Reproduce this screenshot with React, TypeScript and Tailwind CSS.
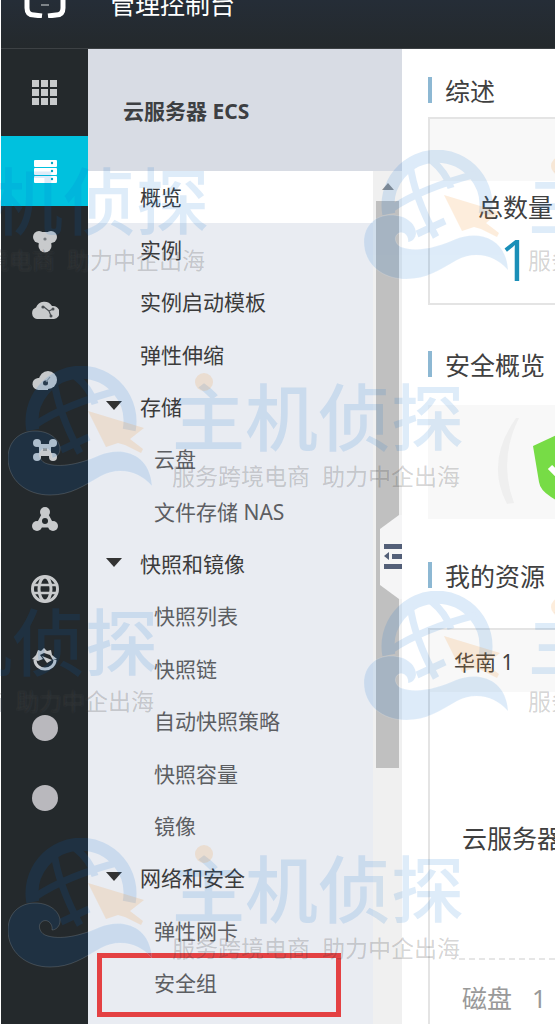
import React from 'react';
import clsx from 'clsx';

interface MenuItem {
  label: string;
  level: 'group' | 'item' | 'child';
  active?: boolean;
  highlighted?: boolean;
}

const menuItems: MenuItem[] = [
  { label: '概览', level: 'item', active: true },
  { label: '实例', level: 'item' },
  { label: '实例启动模板', level: 'item' },
  { label: '弹性伸缩', level: 'item' },
  { label: '存储', level: 'group' },
  { label: '云盘', level: 'child' },
  { label: '文件存储 NAS', level: 'child' },
  { label: '快照和镜像', level: 'group' },
  { label: '快照列表', level: 'child' },
  { label: '快照链', level: 'child' },
  { label: '自动快照策略', level: 'child' },
  { label: '快照容量', level: 'child' },
  { label: '镜像', level: 'child' },
  { label: '网络和安全', level: 'group' },
  { label: '弹性网卡', level: 'child' },
  { label: '安全组', level: 'child', highlighted: true },
];

const Icon: React.FC<{ children: React.ReactNode }> = ({ children }) => (
  <svg viewBox="0 0 28 28" className="size-7" fill="currentColor" aria-hidden="true">
    {children}
  </svg>
);

const GridIcon = () => (
  <Icon>
    {[1, 10, 19].map(y => [1, 10, 19].map(x => <rect key={`${x}-${y}`} x={x} y={y} width="7" height="7" />))}
  </Icon>
);

// Icons of the product rail, top to bottom
const products: { name: string; icon: React.ReactNode }[] = [
  {
    name: '云服务器 ECS',
    icon: (
      <>
        {[3, 11, 19].map(y => (
          <g key={y}>
            <rect x="3" y={y} width="23" height="7" rx="1" />
            <circle cx="21" cy={y + 3} r="1.2" fill="#00a5c4" />
          </g>
        ))}
      </>
    ),
  },
  {
    name: '云数据库 RDS',
    icon: (
      <>
        <circle cx="8" cy="10" r="6" />
        <circle cx="20" cy="10" r="6" />
        <circle cx="14" cy="19" r="6.5" />
        <path d="M6 5h16l-1 10-4 8h-6l-4-8z" />
        <circle cx="14" cy="12" r="1.6" fill="#777c80" />
      </>
    ),
  },
  {
    name: '负载均衡',
    icon: (
      <>
        <path d="M6 23a6 6 0 0 1-1-11.500A9 9 0 0 1 21 10a6.500 6.500 0 0 1 2 13z" />
        <path d="M13 11l5 4 4-2M18 15l2 5" stroke="#4b5054" strokeWidth="1.200" fill="none" />
        <circle cx="12" cy="11" r="1.600" fill="#4b5054" />
        <circle cx="22" cy="13" r="1.500" fill="#4b5054" />
        <circle cx="20" cy="20" r="1.500" fill="#4b5054" />
      </>
    ),
  },
  {
    name: '对象存储 OSS',
    icon: (
      <>
        <circle cx="17" cy="14" r="9" />
        <path d="M8 24a6 6 0 0 1-1-12h10v12z" />
        <circle cx="14.500" cy="17" r="2.500" fill="#30363a" />
        <path d="M15 16l4-5" stroke="#8c9296" strokeWidth="1.200" />
      </>
    ),
  },
  {
    name: '专有网络 VPC',
    icon: (
      <>
        <path d="M6 7l16 14M22 7L6 21" stroke="currentColor" strokeWidth="4" />
        <circle cx="6" cy="7" r="4" />
        <circle cx="22" cy="7" r="4" />
        <circle cx="6" cy="21" r="4" />
        <circle cx="22" cy="21" r="4" />
        <rect x="8" y="8" width="12" height="12" rx="2" />
        <rect x="12" y="12" width="4" height="3" fill="#8c9296" />
      </>
    ),
  },
  {
    name: '内容分发 CDN',
    icon: (
      <>
        <path d="M14 6L6 21h16z" stroke="currentColor" strokeWidth="3" />
        <circle cx="14" cy="7" r="5" />
        <circle cx="6" cy="21" r="5" />
        <circle cx="22" cy="21" r="5" />
        <circle cx="14" cy="16" r="3" fill="#24292c" />
      </>
    ),
  },
  {
    name: '域名',
    icon: (
      <g fill="none" stroke="currentColor" strokeWidth="3">
        <circle cx="14" cy="14" r="12.500" />
        <ellipse cx="14" cy="14" rx="6" ry="12" />
        <path d="M2 10h24M2 18h24" strokeWidth="2.500" />
      </g>
    ),
  },
  {
    name: '云监控',
    icon: (
      <>
        <path d="M4 15a10 9 0 1 0 20 0" fill="none" stroke="currentColor" strokeWidth="3" />
        <path d="M1 14l4-4 2-5 3 1 3-3 3 3 4-1 1 5 5 4-4 1-3-5-6-2-4 2 3 4-5 2z" />
        <path d="M11 11l10 4-5 3z" />
      </>
    ),
  },
  { name: '更多产品', icon: <circle cx="14" cy="14" r="13" fill="#b9b8bd" /> },
  { name: '更多服务', icon: <circle cx="14" cy="14" r="13" fill="#b9b8bd" /> },
];

const Header = () => (
  <header className="h-[49px] overflow-hidden border-b border-[#3d4144] bg-linear-to-b from-[#252d37] to-[#24292c] text-white">
    <div className="-mt-3 flex h-8 items-center">
      <a href="#home" aria-label="首页" className="ml-[23px] mr-11">
        <svg viewBox="0 0 42 28" className="h-7 w-[42px]" fill="none">
          <path d="M18 1H9Q3 1 3 8v10q0 7 7 7l8 1M24 1h9q6 0 6 7v10q0 7-7 7l-8 1" stroke="#fff" strokeWidth="5" />
          <path d="M17 15h8" stroke="#7d8388" strokeWidth="2" />
        </svg>
      </a>
      <a href="#console" className="whitespace-nowrap text-[25px] leading-8">管理控制台</a>
    </div>
  </header>
);

const ProductRail = () => (
  <nav aria-label="产品" className="w-[87px] shrink-0 bg-[#24292c] text-[#c8cacc]">
    <button aria-label="全部产品" className="flex h-[87px] w-full items-center justify-center">
      <GridIcon />
    </button>
    <ul className="grid h-[697px] auto-rows-fr">
      {products.map((p, i) => (
        <li key={p.name}>
          <a
            href="#product"
            aria-label={p.name}
            className={clsx('flex h-full items-center justify-center', i === 0 && 'bg-[#00c1de] text-white')}
          >
            <Icon>{p.icon}</Icon>
          </a>
        </li>
      ))}
    </ul>
  </nav>
);

const Scrollbar = () => (
  <div className="flex w-[29px] shrink-0 flex-col items-center bg-[#f0f0f0]">
    <svg viewBox="0 0 12 7" className="mb-[11px] mt-3 h-[7px] w-3">
      <path d="M0 7l6-7 6 7z" fill="#8e8e8e" />
    </svg>
    <div className="h-[567px] w-[23px] bg-[#c0c0c0]" />
  </div>
);

const SideMenu = () => (
  <aside className="relative flex w-[314px] shrink-0 flex-col bg-[#e9ecf2]">
    <h2 className="flex h-[122px] items-center bg-[#d8dce4] pl-[35px] pt-1 text-[21px] font-bold text-[#3d3f42]">
      云服务器 ECS
    </h2>
    <div className="flex flex-1">
      <ul className="grid h-[838px] flex-1 auto-rows-fr">
        {menuItems.map(item => (
          <li key={item.label} className={clsx('relative', item.active && 'bg-white')}>
            <a
              href="#menu"
              className={clsx(
                'flex h-full items-center whitespace-nowrap pt-0.5 text-[21px]',
                item.level === 'item' && 'pl-[52px] text-[#3b3b3b]',
                item.level === 'group' && 'pl-[18px] text-[#3b3b3b]',
                item.level === 'child' && 'pl-[66px] text-[#5c5e62]',
              )}
            >
              {item.level === 'group' && (
                <svg viewBox="0 0 16 16" className="mr-[18px] size-4">
                  <path d="M0 1h16L8 10z" fill="#333" />
                </svg>
              )}
              {item.label}
            </a>
            {item.highlighted && (
              <div className="pointer-events-none absolute -bottom-2 -top-1 left-[9px] right-8 border-[5px] border-[#e44143]" />
            )}
          </li>
        ))}
      </ul>
      <Scrollbar />
    </div>
    <button aria-label="收起菜单" className="absolute right-0 top-[466px]">
      <svg viewBox="0 0 22 84" className="h-[84px] w-[22px]">
        <path d="M22 0h-3L0 14v56l19 14h3z" fill="#f5f5f6" />
        <path d="M4 29h18v5H4zM12 39h10v5H12zM4 49h18v5H4zM4 41l5-4v8z" fill="#535f78" />
      </svg>
    </button>
  </aside>
);

const SectionTitle: React.FC<{ children: React.ReactNode }> = ({ children }) => (
  <h3 className="flex h-[26px] items-center border-l-4 border-[#8db8d3] pl-[13px] pt-0.5 text-[25px] leading-[26px] text-[#404040]">
    {children}
  </h3>
);

const Overview = () => (
  <main className="flex min-w-0 flex-1 flex-col overflow-hidden whitespace-nowrap bg-white pl-[26px] pt-7">
    <SectionTitle>综述</SectionTitle>
    <section className="mt-[14px] h-[188px] border-2 border-r-0 border-[#e4e4e4]">
      <div className="h-[62px] bg-[#f8f8f8]" />
      <div className="ml-12 flex w-fit flex-col items-center">
        <p className="mt-2 text-[25px] leading-9 text-[#404040]">总数量</p>
        <p className="font-['Open_Sans',sans-serif] text-[56px] leading-[68px] text-[#1a8fb8]">1</p>
      </div>
    </section>

    <div className="mt-[46px]">
      <SectionTitle>安全概览</SectionTitle>
    </div>
    <section className="mt-7 h-[114px] overflow-hidden bg-[#f8f8f8]">
      <svg viewBox="0 0 180 114" className="ml-[66px] h-[114px] w-[180px]">
        <path d="M22 13Q-9 57 13 99l7-1Q4 55 25 13z" fill="#efefef" />
        <path d="M84 20L39 41l6 36q1 8 12 15l27 17 27-17q11-7 12-15l6-36z" fill="#77dc46" />
        <path d="M56 62l12 12 24-26" fill="none" stroke="#fff" strokeWidth="6" />
      </svg>
    </section>

    <div className="mt-[43px]">
      <SectionTitle>我的资源</SectionTitle>
    </div>
    <section className="mt-10 flex-1 border-l-2 border-t-2 border-[#e4e4e4]">
      <h4 className="flex h-[62px] items-center bg-[#f8f8f8] pl-6 pt-1 text-[21px] text-[#404040]">华南 1</h4>
      <p className="mt-32 pl-8 text-[25px] leading-9 text-[#404040]">云服务器</p>
      <div className="ml-[29px] mt-[102px] border-t-2 border-dashed border-[#e6e6e6]" />
      <dl className="mt-5 flex gap-5 pl-8 text-[25px] leading-9 text-[#999]">
        <dt>磁盘</dt>
        <dd>1</dd>
      </dl>
    </section>
  </main>
);

const wavePath =
  'M0 92C0 75 12 65 27 65C42 65 52 74 52 83C52 88 48 92 44 92C45 86 40 81 35 83C29 86 31 94 37 97C52 103 75 97 92 89C115 80 142 88 144 120C132 106 112 100 93 110C75 120 63 129 42 129C18 129 0 114 0 92Z';

const Watermark: React.FC<{ className: string }> = ({ className }) => (
  <div className={clsx('absolute flex w-[456px] gap-5 whitespace-nowrap', className)}>
    <svg viewBox="0 0 144 130" className="h-[130px] w-36 shrink-0" fill="none">
      {/* globe ring, meridians and the wave share one opacity so the overlaps stay flat */}
      <g stroke="rgb(0,105,210)" opacity="0.13">
        <path d="M24.800 64A49 49 0 1 1 121.200 64" strokeWidth="13" />
        <path d="M46 14Q50 46 72 87M67 10Q82 22 87 38M27 59Q58 38 112 24M53 84L81 71" strokeWidth="7" />
        <path d={wavePath} fill="rgb(0,105,210)" stroke="none" />
      </g>
      <path d={wavePath} stroke="#fff" opacity="0.15" />
      <path d="M80 45l56 17-14 11 13 10-2 4-16-8-7-2-12 4z" fill="rgb(245,140,35)" opacity="0.16" />
    </svg>
    <div className="pt-[14px]">
      <p className="text-[73px] font-medium leading-[74px] text-[rgb(0,105,210)]/13">主机侦探</p>
      <p className="mt-1.5 flex gap-3 text-[23px] leading-8 text-black/18 [text-shadow:0_0_2px_rgba(255,255,255,0.1)]">
        <span>服务跨境电商</span>
        <span>助力中企出海</span>
      </p>
    </div>
    <span className="absolute left-[187px] top-[7px] size-[18px] rounded-full bg-[rgb(245,140,35)]/16" />
  </div>
);

const App: React.FC = () => (
  <div className="relative flex min-h-screen flex-col overflow-hidden bg-white pl-px font-['Noto_Sans','Noto_Sans_CJK_SC',sans-serif]">
    <Header />
    <div className="flex flex-1">
      <ProductRail />
      <SideMenu />
      <Overview />
    </div>
    <div className="pointer-events-none absolute inset-0 overflow-hidden" aria-hidden="true">
      <Watermark className="-left-[247px] top-[150px]" />
      <Watermark className="left-[364px] top-[150px]" />
      <Watermark className="left-2 top-[366px]" />
      <Watermark className="-left-[298px] top-[591px]" />
      <Watermark className="left-[364px] top-[591px]" />
      <Watermark className="left-2 top-[838px]" />
    </div>
  </div>
);

export default App;
